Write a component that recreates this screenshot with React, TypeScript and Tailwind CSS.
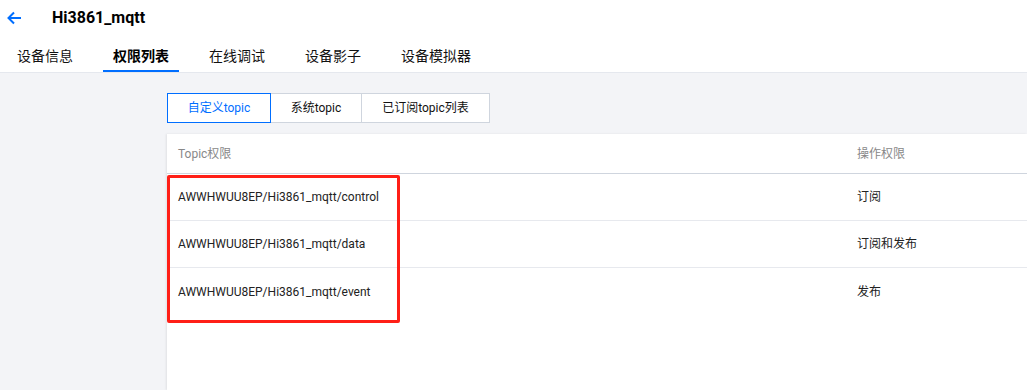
const tabs = ["设备信息", "权限列表", "在线调试", "设备影子", "设备模拟器"];
const segments = [
  { label: "自定义topic", w: "w-[104px]" },
  { label: "系统topic", w: "w-[92px]" },
  { label: "已订阅topic列表", w: "w-[129px]" },
];
const rows = [
  { topic: "AWWHWUU8EP/Hi3861_mqtt/control", perm: "订阅" },
  { topic: "AWWHWUU8EP/Hi3861_mqtt/data", perm: "订阅和发布" },
  { topic: "AWWHWUU8EP/Hi3861_mqtt/event", perm: "发布" },
];

export default function App() {
  return (
    <div
      className="flex h-[390px] w-[1027px] flex-col overflow-hidden bg-[#f3f4f7]"
      style={{ fontFamily: '"Roboto", "Noto Sans CJK SC", sans-serif' }}
    >
      <header className="bg-white">
        <div className="flex h-[36px] items-center">
          <svg
            className="ml-[6px] h-[16px] w-[16px]"
            viewBox="0 0 16 16"
            fill="none"
            stroke="#006eff"
            strokeWidth="2"
          >
            <path d="M15 8H2.5M8 2.5L2.5 8L8 13.5" />
          </svg>
          <h1 className="ml-[30px] text-[16px] font-bold text-black">Hi3861_mqtt</h1>
        </div>
        <nav className="flex h-[37px] items-stretch gap-[20px] border-b border-[#e5e8ee] pl-[7px]">
          {tabs.map((t, i) => (
            <div
              key={t}
              className={
                i === 1
                  ? "flex items-center justify-center border-b-2 border-[#006eff] px-[10px] pt-[7px] text-[14px] font-bold text-black"
                  : "flex items-center justify-center border-b-2 border-transparent px-[10px] pt-[7px] text-[14px] text-[#111]"
              }
            >
              {t}
            </div>
          ))}
        </nav>
      </header>

      <main className="flex flex-1 flex-col pl-[167px]">
        <div className="mt-[20px] flex">
          {segments.map((s, i) => (
            <button
              key={s.label}
              className={
                i === 0
                  ? `relative z-10 flex h-[30px] ${s.w} items-center justify-center border border-[#006eff] bg-white text-[12px] text-[#006eff]`
                  : `-ml-px flex h-[30px] ${s.w} items-center justify-center border border-[#cfd5de] bg-white text-[12px] text-[#111]`
              }
            >
              {s.label}
            </button>
          ))}
        </div>

        <section className="relative mt-[11px] flex-1 bg-white shadow-[-1px_0_2px_rgba(0,0,0,0.08)]">
          <div className="flex h-[40px] items-center border-b border-[#cfd5de] text-[12px] text-[#888]">
            <div className="w-[690px] pl-[11px]">Topic权限</div>
            <div>操作权限</div>
          </div>
          {rows.map((r, i) => (
            <div
              key={r.topic}
              className={`flex h-[47px] items-center text-[12px] text-[#222] ${
                i < rows.length - 1 ? "border-b border-[#e7e9ee]" : ""
              }`}
            >
              <div className="w-[690px] pl-[11px]">{r.topic}</div>
              <div>{r.perm}</div>
            </div>
          ))}
          <div className="pointer-events-none absolute left-0 top-[41px] h-[148px] w-[233px] rounded-[2px] border-[3px] border-[#ff1f17]" />
        </section>
      </main>
    </div>
  );
}
